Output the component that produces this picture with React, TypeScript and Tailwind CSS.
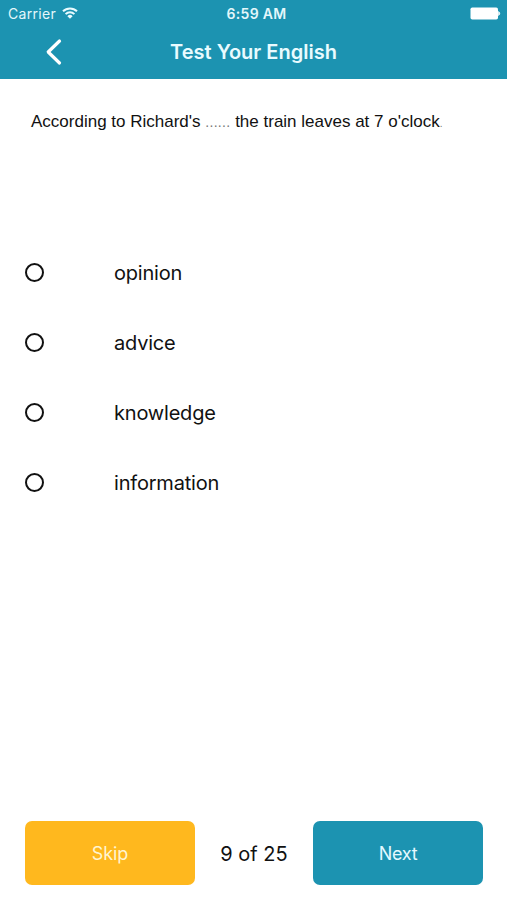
import { useState } from "react";

const options = ["opinion", "advice", "knowledge", "information"];

function WifiIcon() {
  return (
    <svg width="16" height="12" viewBox="0 0 16 12" fill="none" stroke="#e9fbff" strokeWidth="2" className="mb-[2px]">
      <path d="M1 4.3a10 10 0 0 1 14 0" />
      <path d="M3.6 7.1a6.3 6.3 0 0 1 8.8 0" />
      <path d="M8 11.8 5.4 9.2a3.6 3.6 0 0 1 5.2 0Z" fill="#e9fbff" stroke="none" />
    </svg>
  );
}

function BatteryIcon() {
  return (
    <svg width="31" height="13" viewBox="0 0 31 13">
      <rect x="0.5" y="0.5" width="27.5" height="12" rx="1.8" fill="#fff" />
      <path d="M28.5 4.5a2.2 2.2 0 0 1 0 4Z" fill="#fff" stroke="#fff" strokeWidth="0.6" />
    </svg>
  );
}

function StatusBar() {
  return (
    <div className="grid h-[27px] grid-cols-3 items-center text-[#e4f7fb]">
      <div className="flex items-center gap-[6px] pl-2">
        <span className="text-[14px] leading-none tracking-[0.3px]">Carrier</span>
        <WifiIcon />
      </div>
      <span className="pt-px pl-1.5 text-center text-[14px] leading-none font-semibold tracking-[0.3px]">6:59 AM</span>
      <div className="flex justify-end pr-[6px]">
        <BatteryIcon />
      </div>
    </div>
  );
}

export default function App() {
  const [selected, setSelected] = useState<string | null>(null);

  return (
    <div className="flex h-[900px] w-[507px] flex-col overflow-hidden bg-white font-['Inter',sans-serif] text-[#111]">
      <header className="h-[79px] shrink-0 bg-[#1c93b1]">
        <StatusBar />
        <div className="grid h-[50px] grid-cols-[80px_1fr_80px] items-center">
          <button className="pl-[45px]" aria-label="Back">
            <svg width="18" height="28" viewBox="0 0 18 28" fill="none" stroke="#fff" strokeWidth="3.2" strokeLinecap="round" strokeLinejoin="round">
              <path d="M14.5 3 3.2 14l11.3 11" />
            </svg>
          </button>
          <h1 className="text-center text-[20px] leading-none font-semibold text-[#e9fbff]">Test Your English</h1>
        </div>
      </header>

      <p className="mt-8 ml-[31px] h-[125px] whitespace-nowrap font-['Liberation_Sans',sans-serif] text-[17px] leading-[22px]">
        According to Richard's <span className="text-[14px] tracking-[0.3px] text-[#777]">......</span> the train leaves at 7 o'clock
        <span className="text-[10px] text-[#777]">.</span>
      </p>

      <div className="mt-[1px] flex flex-col">
        {options.map((o) => (
          <button key={o} onClick={() => setSelected(o)} className="flex h-[70.2px] items-center pl-[25px] text-left">
            <span className="grid size-[19px] place-items-center rounded-full border-2 border-[#111]">
              {selected === o && <span className="size-2.5 rounded-full bg-[#111]" />}
            </span>
            <span className="pt-px pl-[70px] text-[20px] leading-none tracking-[-0.2px]">{o}</span>
          </button>
        ))}
      </div>

      <footer className="mt-auto mb-[15px] flex h-16 items-center justify-between pr-6 pl-[25px]">
        <button className="h-16 w-[170px] rounded-[7px] bg-[#ffb81e] text-[18px] tracking-[-0.1px] text-[#fff5d2]">Skip</button>
        <span className="pt-0.5 text-[20px]">9 of 25</span>
        <button className="h-16 w-[170px] rounded-[7px] bg-[#1c93b1] text-[18px] tracking-[-0.3px] text-[#e4f9ff]">Next</button>
      </footer>
    </div>
  );
}
